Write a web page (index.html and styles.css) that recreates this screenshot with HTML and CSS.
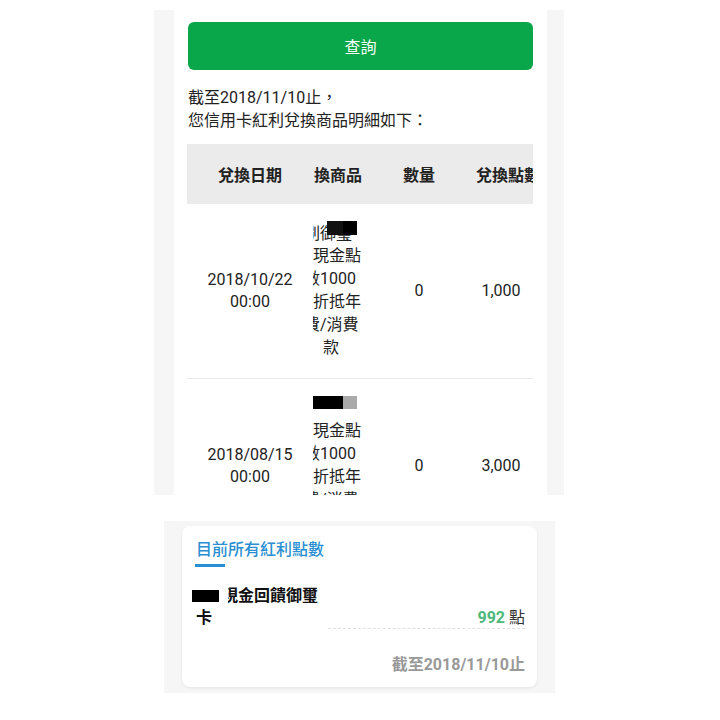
FILE: index.html
```html
<!DOCTYPE html>
<html lang="zh-Hant">
<head>
    <meta charset="UTF-8">
    <meta name="viewport" content="width=device-width, initial-scale=1.0">
    <title>紅利兌換查詢</title>
    <link rel="stylesheet" href="styles.css">
</head>
<body>
    <div class="frame-top">
        <div class="panel">
            <button type="button" class="btn-query">查詢</button>
            <p class="summary">截至2018/11/10止，<br>您信用卡紅利兌換商品明細如下：</p>

            <div class="table">
                <div class="thead">
                    <div class="th">兌換日期</div>
                    <div class="th th-product">換商品</div>
                    <div class="th">數量</div>
                    <div class="th th-points">兌換點數</div>
                </div>

                <div class="row">
                    <div class="td">2018/10/22<br>00:00</div>
                    <div class="td td-product">
                        <div class="line cut">刷御璽</div>
                        <div class="line">現金點</div>
                        <div class="line cut">數1000</div>
                        <div class="line">折抵年</div>
                        <div class="line cut">費/消費</div>
                        <div class="line in">款</div>
                        <span class="mask mask-a"></span>
                    </div>
                    <div class="td">0</div>
                    <div class="td td-points">1,000</div>
                </div>

                <div class="row">
                    <div class="td">2018/08/15<br>00:00</div>
                    <div class="td td-product">
                        <div class="line">&nbsp;</div>
                        <div class="line">現金點</div>
                        <div class="line cut">數1000</div>
                        <div class="line">折抵年</div>
                        <div class="line cut">費/消費</div>
                        <div class="line in">款</div>
                        <span class="mask mask-b"></span>
                    </div>
                    <div class="td">0</div>
                    <div class="td td-points">3,000</div>
                </div>
            </div>
        </div>
    </div>

    <div class="frame-bottom">
        <div class="card">
            <div class="card-title">目前所有紅利點數</div>
            <div class="card-bar"></div>
            <div class="card-item">
                <div class="card-name"><span class="redact"></span><span class="name-text">現金回饋御璽</span>卡</div>
                <div class="card-points"><span class="points-num">992</span> 點</div>
            </div>
            <div class="card-date">截至2018/11/10止</div>
        </div>
    </div>
</body>
</html>
```

FILE: styles.css
```css
body {
    font-family: Roboto, "Noto Sans CJK TC", sans-serif;
    background-color: #fff;
    color: #222;
    margin: 0;
    padding: 0;
    font-size: 16px;
}

.frame-top {
    margin: 10px 0 0 154px;
    width: 373px;
    height: 485px;
    padding: 0 17px 0 20px;
    background-color: #f6f6f6;
}

.panel {
    height: 100%;
    background-color: #fff;
    overflow: hidden;
    padding: 12px 14px 0;
    box-sizing: border-box;
}

.btn-query {
    display: block;
    width: 100%;
    height: 48px;
    border: none;
    border-radius: 6px;
    background-color: #0aa64a;
    color: #fff;
    font-family: inherit;
    font-size: 16px;
    cursor: pointer;
}

.summary {
    margin: 16px 0 12px;
    line-height: 23px;
}

.table {
    width: 346px;
    margin-left: -1px;
    overflow: hidden;
}

.thead,
.row {
    display: grid;
    grid-template-columns: 126px 58px 96px 100px;
    width: 380px;
}

.thead {
    height: 60px;
    background-color: #ebebeb;
    align-items: center;
    font-weight: bold;
}

.th {
    text-align: center;
    white-space: nowrap;
}

.th-product {
    text-align: left;
    padding-left: 1px;
}

.th-points {
    text-align: left;
    padding-left: 9px;
}

.row {
    height: 174px;
    border-bottom: 1px solid #e8e8e8;
    align-items: center;
    text-align: center;
}

.td {
    line-height: 22px;
}

.td-product {
    position: relative;
    align-self: stretch;
    display: flex;
    flex-direction: column;
    justify-content: center;
    overflow: hidden;
    text-align: left;
    line-height: 22.8px;
    white-space: nowrap;
}

.line.cut {
    text-indent: -9px;
}

.line.in {
    text-indent: 10px;
}

.mask {
    position: absolute;
    top: 17px;
    height: 14px;
}

.mask-a {
    left: 14px;
    width: 30px;
    background: linear-gradient(to right, #111 0, #111 16px, #000 16px);
}

.mask-b {
    left: 0;
    width: 44px;
    height: 13px;
    background: linear-gradient(to right, #000 0, #000 30px, #aaa 30px);
}

.td-points {
    padding-right: 32px;
}

.frame-bottom {
    margin: 26px 0 0 164px;
    width: 355px;
    padding: 5px 18px 6px;
    background-color: #f6f6f6;
}

.card {
    background-color: #fff;
    border-radius: 8px;
    box-shadow: 0 1px 3px rgba(0, 0, 0, 0.08);
    padding: 13px 12px 11px 14px;
}

.card-title {
    color: #2a8fd2;
    font-weight: 500;
    line-height: 22px;
}

.card-bar {
    width: 30px;
    height: 3px;
    margin: 3px 0 0 -1px;
    background-color: #2a8fd2;
}

.card-item {
    display: flex;
    margin-top: 18px;
}

.card-name {
    width: 132px;
    font-weight: bold;
    line-height: 22px;
    color: #111;
}

.redact {
    display: inline-block;
    width: 27px;
    height: 12px;
    margin-left: -4px;
    background-color: #000;
    vertical-align: -1px;
}

.name-text {
    position: relative;
    margin-left: 3px;
}

.name-text::before {
    content: "";
    position: absolute;
    left: -1px;
    top: 2px;
    width: 7px;
    height: 18px;
    background-color: #fff;
}

.card-points {
    flex: 1;
    align-self: flex-end;
    text-align: right;
    line-height: 20px;
    border-bottom: 1px dashed #e0e0e0;
    color: #333;
}

.points-num {
    color: #4cb87b;
    font-weight: bold;
}

.card-date {
    margin-top: 25px;
    text-align: right;
    line-height: 22px;
    color: #999;
    font-weight: bold;
}
```
